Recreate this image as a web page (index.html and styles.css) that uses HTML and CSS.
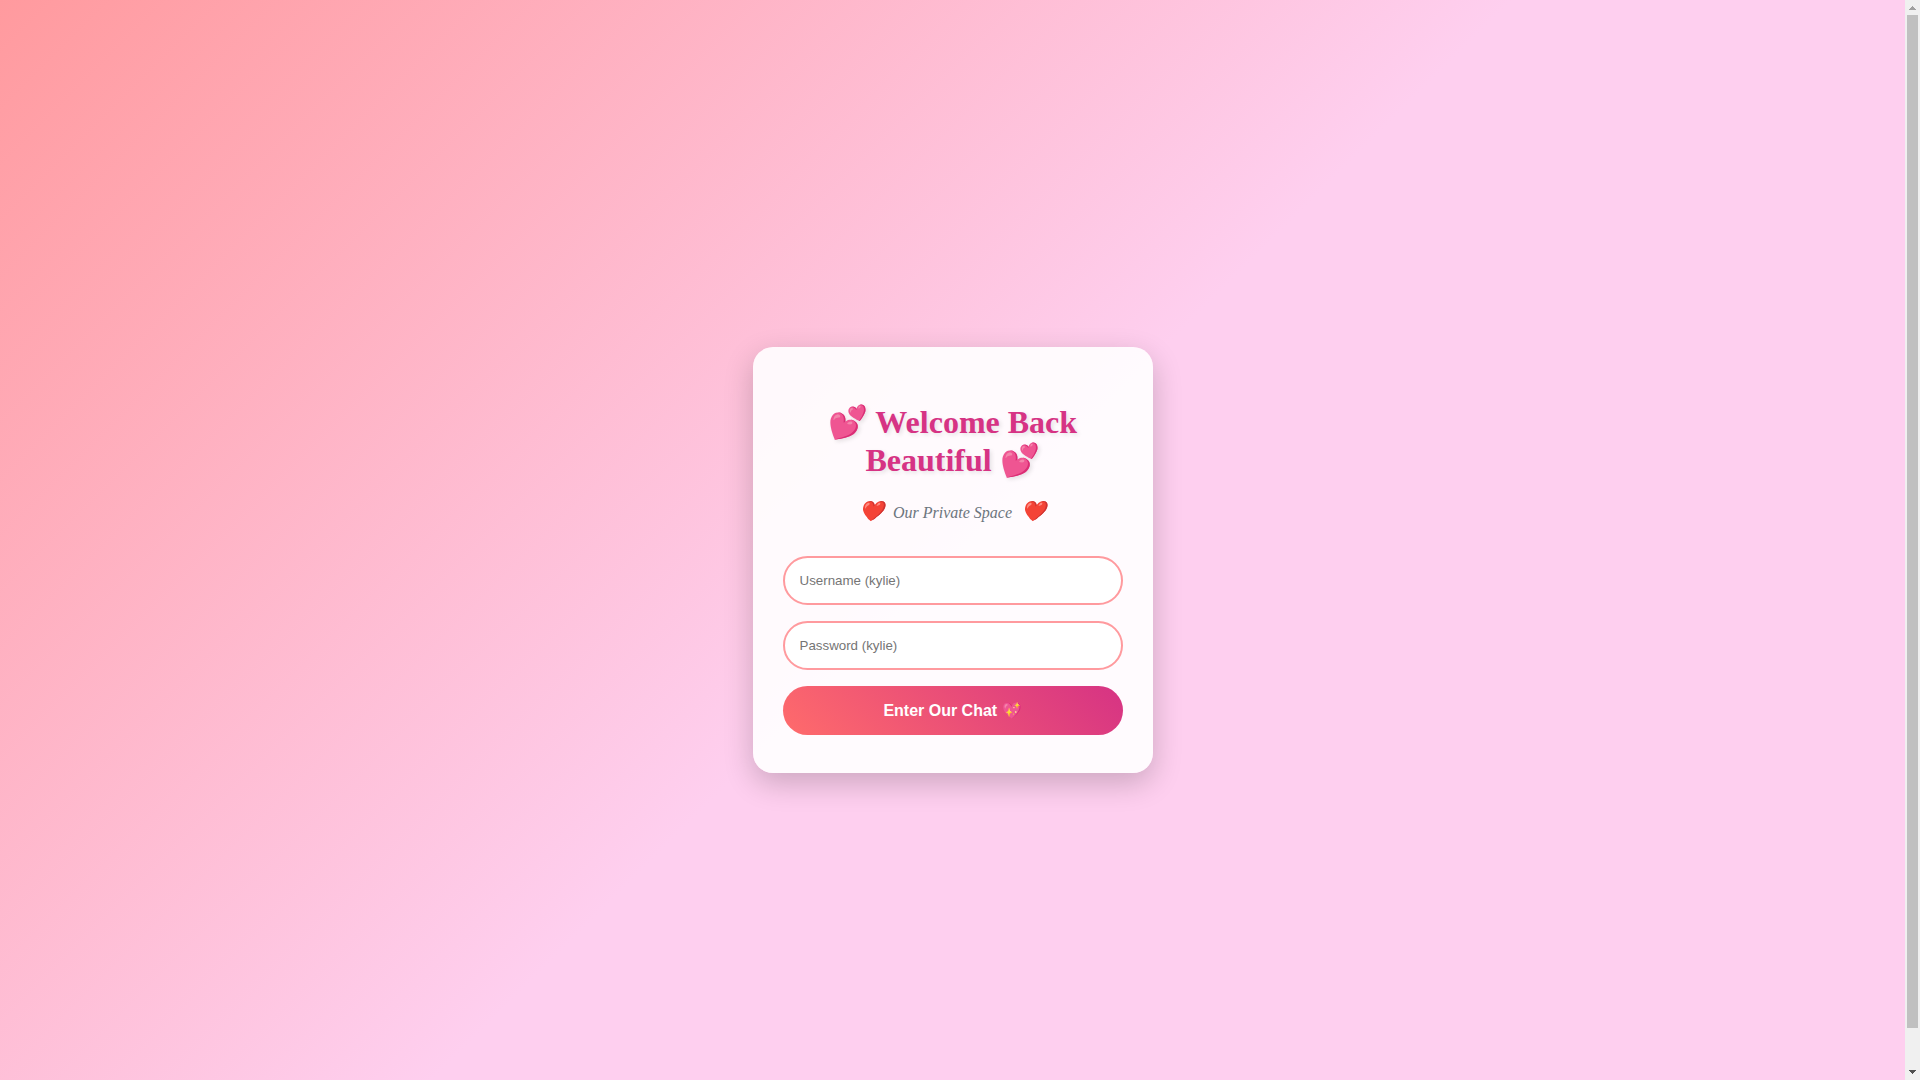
FILE: index.html
```html
<!DOCTYPE html>
<html lang="en">
<head>
    <meta charset="UTF-8">
    <meta name="viewport" content="width=device-width, initial-scale=1.0">
    <title>Our Private Space</title>
    <link rel="stylesheet" href="styles.css">
</head>
<body>
    <div class="page">
        <div class="login-container">
            <form class="login-form">
                <h2>💕 Welcome Back Beautiful 💕</h2>
                <p class="subtitle"><span class="heart">❤️</span> Our Private Space <span class="heart">❤️</span></p>
                <input type="text" placeholder="Username (kylie)" aria-label="Username" required>
                <input type="password" placeholder="Password (kylie)" aria-label="Password" required>
                <button type="submit">Enter Our Chat 💖</button>
            </form>
        </div>
    </div>

    <div class="scrollbar" aria-hidden="true">
        <svg width="15" height="15" viewBox="0 0 15 15" shape-rendering="crispEdges">
            <path d="M7 6h1v1h1v1h1v1h1v1H4V9h1V8h1V7h1z" fill="#a0a0a0"></path>
        </svg>
        <div class="track">
            <div class="thumb"></div>
        </div>
        <svg width="15" height="15" viewBox="0 0 15 15" shape-rendering="crispEdges">
            <path d="M4 5h7v1h-1v1H9v1H8v1H7V8H6V7H5V6H4z" fill="#505050"></path>
        </svg>
    </div>
</body>
</html>
```
FILE: styles.css
```css
* {
    box-sizing: border-box;
}

body {
    font-family: Georgia, "Liberation Serif", serif;
    margin: 0;
    height: 100vh;
    display: flex;
}

.page {
    flex: 1;
    overflow-y: auto;
    scrollbar-width: none;
}

.login-container {
    background: linear-gradient(135deg, #ff9a9e 0%, #fecfef 50%, #fecfef 100%);
    display: flex;
    justify-content: center;
    align-items: center;
    padding: 20px;
    min-height: calc(100vh + 40px);
}

.login-form {
    background: rgba(255, 255, 255, 0.9);
    padding: 30px;
    border-radius: 20px;
    box-shadow: 0 10px 30px rgba(0, 0, 0, 0.2);
    width: 100%;
    max-width: 400px;
    text-align: center;
}

h2 {
    color: #d63384;
    font-size: 32px;
    margin: 26px 0 20px;
    text-shadow: 2px 2px 4px rgba(0, 0, 0, 0.1);
}

.subtitle {
    color: #6c757d;
    font-style: italic;
    margin: 0 0 25px;
}

.heart {
    font-size: 20px;
    margin: 0 5px;
}

input {
    width: 100%;
    padding: 15px;
    margin: 8px 0;
    border: 2px solid #ff9a9e;
    border-radius: 25px;
}

button {
    width: 100%;
    padding: 15px;
    margin: 8px 0;
    background: linear-gradient(45deg, #ff6b6b, #d63384);
    color: white;
    border: none;
    border-radius: 25px;
    font-size: 16px;
    font-weight: bold;
    cursor: pointer;
}

/* Scrollbar */
.scrollbar {
    width: 15px;
    background: #f0f0f0;
    display: flex;
    flex-direction: column;
}

.track {
    flex: 1;
    padding: 0 2px;
}

.thumb {
    height: 96.5%;
    background: #c0c0c0;
}
```
